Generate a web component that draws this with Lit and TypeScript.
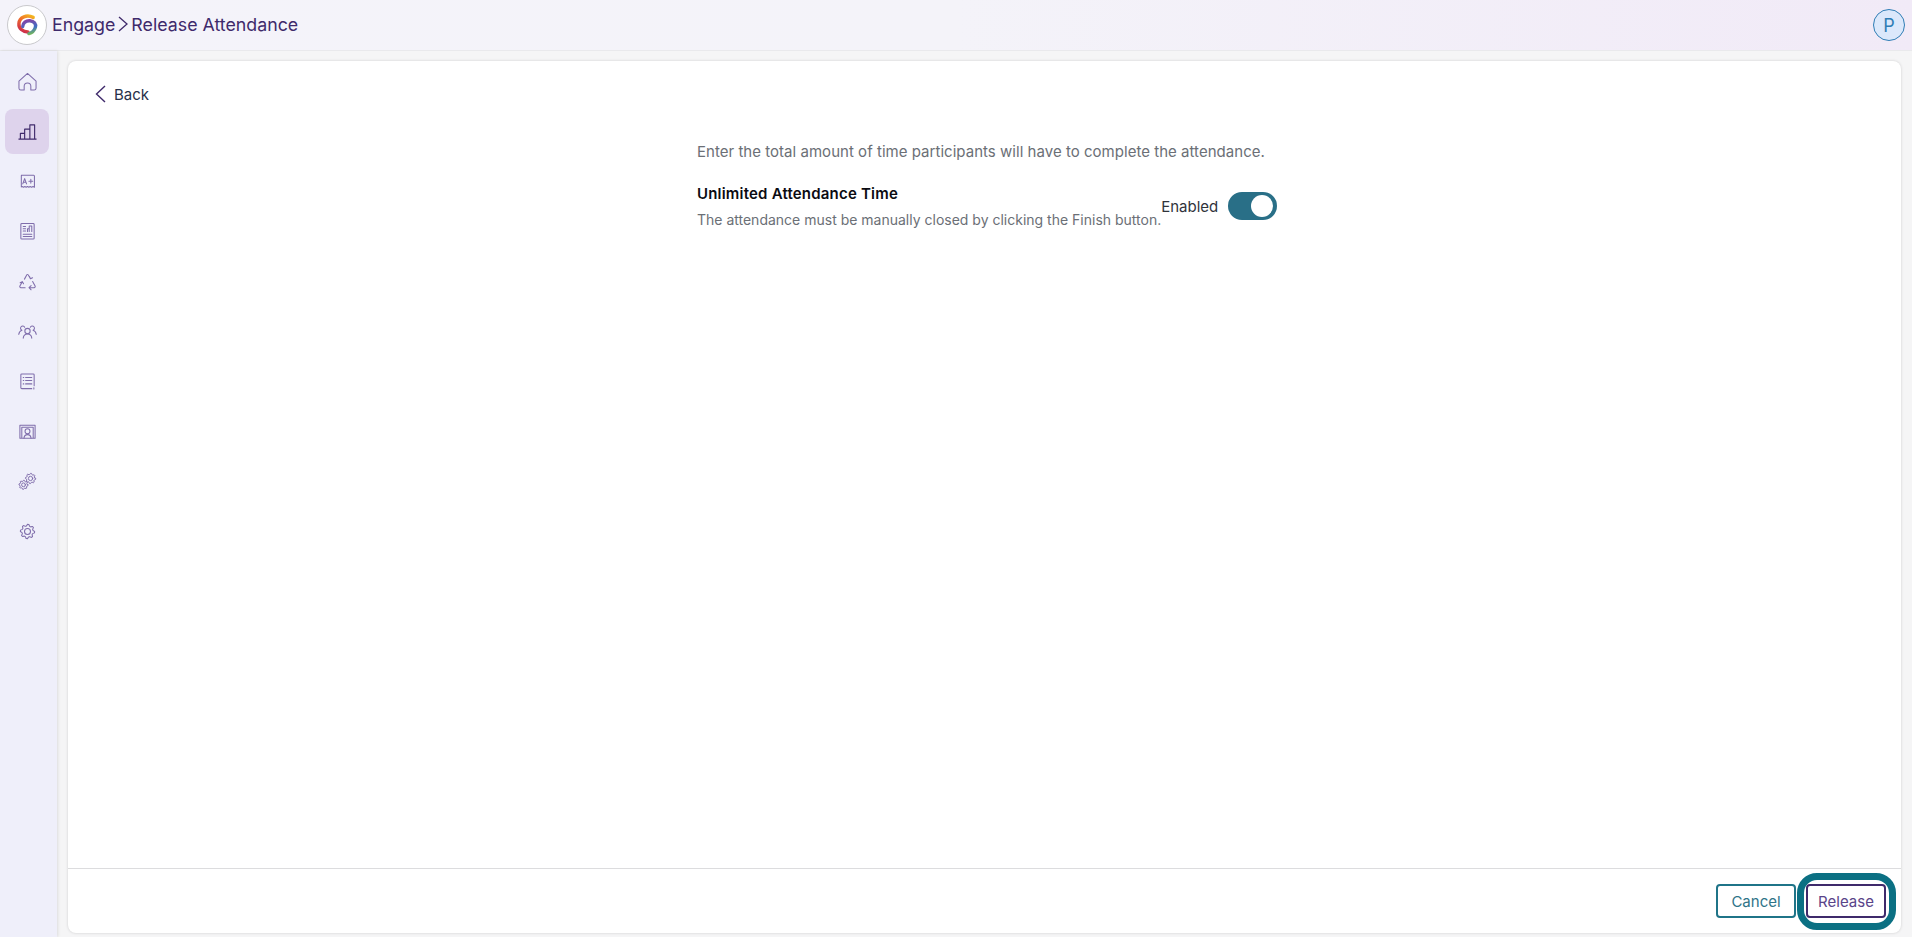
import { LitElement, html, css, svg } from "lit";
import { customElement } from "lit/decorators.js";

const ic = (body: unknown, w = 1.1) => html`<svg class="ic" viewBox="0 0 20 20" fill="none" stroke="#7f6dab" stroke-width=${w} stroke-linecap="round" stroke-linejoin="round">${body}</svg>`;

const gear = (cx: number, cy: number, r: number) => {
  const pts: string[] = [];
  const n = 8;
  for (let i = 0; i < n * 4; i++) {
    const a = (i / (n * 4)) * Math.PI * 2;
    const m = i % 4;
    const rr = m === 0 || m === 1 ? r : r * 0.78;
    pts.push(`${(cx + rr * Math.cos(a)).toFixed(2)},${(cy + rr * Math.sin(a)).toFixed(2)}`);
  }
  return svg`<polygon points=${pts.join(" ")}/><circle cx=${cx} cy=${cy} r=${r * 0.42}/>`;
};

const icons = [
  ic(svg`<path d="M1 9.500 10 1.500l9 8v7.500a2 2 0 0 1-2 2h-3.500v-4a3.500 3.500 0 0 0-7 0v4H3a2 2 0 0 1-2-2z"/>`),
  html`<svg class="ic" viewBox="0 0 20 20" fill="none" stroke="#3f2a6b" stroke-width="1.2" stroke-linejoin="round"><path d="M.5 18h19M2.500 18v-6h4.500v6M7 18V7.500h5.500V18M12.500 18V3h5v15"/></svg>`,
  ic(svg`<path d="M3.500 3.500h13a.8.8 0 0 1 .8.8V16l-1.500-.8-1.500.8-1.500-.8-1.400.8-1.400-.8-1.400.8-1.400-.8-1.400.8-1.500-.8-.8.5V4.300a.8.8 0 0 1 .8-.8z"/><path d="m5 12.500 2-5.500 2 5.500M5.700 10.800h2.600M11.500 9.700h4M13.500 7.700v4"/>`),
  ic(svg`<rect x="3" y="1.500" width="14" height="16.500" rx="1"/><path d="M5.500 4.800h2.500M5.500 7h2.500M5.500 9.500h2.500M5.500 12.800h9M5.500 15.300h9"/><path d="M10 10V7h1.800v3M11.800 10V4.300h2.700V10"/>`),
  ic(svg`<path d="M6.800 7.500 9.300 3a.8.8 0 0 1 1.400 0l2.400 4.100M15.300 6l-2.200 1.100-1-2.300"/><path d="m15.400 10 2.600 4.700a1.200 1.200 0 0 1-1 1.800h-5M13.800 14.300l-2.200 2.200 2.200 2.200"/><path d="M7.500 16.500H3a1.200 1.200 0 0 1-1-1.800l2.400-4.200M2.300 11.300l2.200-1.200 1.300 2.200"/>`),
  ic(svg`<circle cx="10" cy="9.500" r="2.800"/><path d="M5.500 17c.3-2.800 2.100-4.300 4.500-4.300s4.200 1.500 4.500 4.300"/><path d="M7 5.500a2.300 2.300 0 1 0-2.900 3.200C2.400 9.300 1.100 10.700.8 13M13 5.500a2.300 2.300 0 1 1 2.900 3.200c1.700.6 3 2 3.300 4.300"/>`),
  ic(svg`<path d="M17 14.500V3a1 1 0 0 0-1-1H4a1 1 0 0 0-1 1v13.500a1 1 0 0 0 1 1h10.500"/><path d="M5.500 5.700h.6M8 5.700h6.500M5.500 9h.6M8 9h6.500M5.500 12.500h.6M8 12.500h6.500"/><path d="M16.700 16.500v1.500"/>`),
  ic(svg`<path d="M2 3.500h16v13.500H2zM4 5.500h12M4 5.500V17M16 5.500V17"/><circle cx="10" cy="9.700" r="2.600"/><path d="M6.300 17c.2-2.300 1.600-3.700 3.700-3.700s3.500 1.400 3.700 3.700"/>`),
  ic(svg`${gear(13.200, 6.800, 5.400)}${gear(5.800, 13.500, 4.800)}`, 1),
  ic(svg`${gear(10, 10, 7.500)}`),
];

const logo = html`<svg class="logo" viewBox="0 0 40 40" fill="none" stroke-linecap="round">
  <defs>
    <linearGradient id="g1" gradientUnits="userSpaceOnUse" x1="28" y1="10" x2="18" y2="30"><stop offset="0" stop-color="#f4c21f"/><stop offset=".45" stop-color="#ef6a2c"/><stop offset="1" stop-color="#c9264f"/></linearGradient>
    <linearGradient id="g2" gradientUnits="userSpaceOnUse" x1="20" y1="14" x2="24" y2="31"><stop offset="0" stop-color="#8a3fa3"/><stop offset=".55" stop-color="#3f6fc4"/><stop offset="1" stop-color="#7cc44a"/></linearGradient>
  </defs>
  <path d="M26.500 12c-6.500-3.200-14.500-.5-15 6.500-.4 5 4 8.800 9.500 8.800" stroke="url(#g1)" stroke-width="3.600"/>
  <path d="M15.500 21.500c.2-3.700 3.500-6.300 7.500-6 4.500.4 6.800 3.400 5.800 7-1 3.400-3.800 5.800-6.800 6.500" stroke="url(#g2)" stroke-width="3.600"/>
</svg>`;

@customElement("app-root")
export class AppRoot extends LitElement {
  static styles = css`
    :host {
      display: flex;
      flex-direction: column;
      height: 937px;
      width: 1912px;
      overflow: hidden;
      font-family: Inter, "Noto Sans", sans-serif;
      background: #f5f5f6;
    }
    .top {
      height: 51px;
      flex: none;
      box-sizing: border-box;
      display: flex;
      align-items: center;
      padding: 0 7px;
      background: linear-gradient(90deg, #f4f3fa 0%, #f4f3f9 50%, #f1eaf7 100%);
      border-bottom: 1px solid #e9e9ec;
    }
    .logo-wrap {
      width: 40px;
      height: 40px;
      box-sizing: border-box;
      border: 1px solid #c9c9cc;
      border-radius: 50%;
      background: #fff;
      flex: none;
    }
    .logo { width: 38px; height: 38px; display: block; }
    .crumbs {
      margin-left: 5px;
      display: flex;
      align-items: center;
      font-size: 17.800px;
      color: #3f2a6b;
      transform: translateY(-1px);
    }
    .crumbs svg { width: 12px; height: 18px; margin: 0 2px 0 2px; }
    .avatar {
      margin-left: auto;
      width: 32px;
      height: 32px;
      box-sizing: border-box;
      border: 1.500px solid #2f7db5;
      border-radius: 50%;
      background: #dbe8fb;
      color: #2f7db5;
      font-size: 18px;
      display: flex;
      align-items: center;
      justify-content: center;
    }
    .body { flex: 1; display: flex; min-height: 0; }
    .side {
      width: 57px;
      flex: none;
      background: #efeffa;
      box-shadow: 1px 0 3px rgba(0, 0, 0, 0.1);
      display: flex;
      flex-direction: column;
      padding: 8px 0 0 5px;
      box-sizing: border-box;
    }
    .item {
      width: 44px;
      height: 45px;
      margin-bottom: 5px;
      border-radius: 8px;
      display: flex;
      align-items: center;
      justify-content: center;
    }
    .item.on { background: #ded3ec; }
    .ic { width: 19px; height: 19px; display: block; }
    .main { flex: 1; padding: 10px 11px 4px 11px; min-width: 0; display: flex; }
    .card {
      flex: 1;
      background: #fff;
      border-radius: 8px;
      box-shadow: 0 0 3px rgba(0, 0, 0, 0.16);
      display: flex;
      flex-direction: column;
      min-width: 0;
    }
    .content { flex: 1; padding: 0 27px; }
    .back {
      display: flex;
      align-items: center;
      height: 20px;
      margin-top: 23px;
      font-size: 15px;
      color: #27304a;
    }
    .back svg { width: 11px; height: 18px; margin-right: 8px; }
    .form { width: 580px; margin: 38px 0 0 602px; }
    .lead { font-size: 15px; line-height: 20px; color: #6b6f76; letter-spacing: 0.03px; white-space: nowrap; }
    .row { display: flex; margin-top: 22px; }
    .title { font-size: 15px; line-height: 20px; font-weight: 600; color: #0b0b12; letter-spacing: 0.2px; }
    .sub { font-size: 14px; line-height: 18px; margin-top: 7px; color: #6b6f76; white-space: nowrap; }
    .state { display: flex; align-items: center; height: 28px; margin-top: 8px; font-size: 15px; color: #30333b; }
    .sw {
      width: 49px;
      height: 28px;
      margin-left: 10px;
      box-sizing: border-box;
      border-radius: 14px;
      background: #296f87;
      display: flex;
      align-items: center;
      justify-content: flex-end;
      padding-right: 4px;
    }
    .sw i { width: 22px; height: 22px; border-radius: 50%; background: #fff; display: block; }
    .foot {
      flex: none;
      height: 65px;
      box-sizing: border-box;
      border-top: 1px solid #dcdcde;
      display: flex;
      align-items: flex-start;
      justify-content: flex-end;
      gap: 10px;
      padding: 15px 15px 0 0;
    }
    .btn {
      width: 80px;
      height: 34px;
      box-sizing: border-box;
      border-radius: 4px;
      background: #fff;
      font: 15px Inter, "Noto Sans", sans-serif;
      padding: 0;
    }
    .cancel { border: 2px solid #1f7488; color: #2f7488; }
    .release {
      position: relative;
      border: 2px solid #3f2a6b;
      color: #5a4489;
    }
    .release::after {
      content: "";
      position: absolute;
      left: -11px;
      right: -12px;
      top: -13px;
      bottom: -14px;
      border: 7px solid #0b7083;
      border-radius: 20px;
    }
  `;

  render() {
    return html`
      <div class="top">
        <div class="logo-wrap">${logo}</div>
        <div class="crumbs">
          <span>Engage</span>
          <svg viewBox="0 0 12 18" fill="none" stroke="#3f2a6b" stroke-width="1.300"><path d="M2 2l8 7-8 7"/></svg>
          <span>Release Attendance</span>
        </div>
        <div class="avatar">P</div>
      </div>
      <div class="body">
        <nav class="side">
          ${icons.map((i, n) => html`<div class="item ${n === 1 ? "on" : ""}">${i}</div>`)}
        </nav>
        <div class="main">
          <section class="card">
            <div class="content">
              <div class="back">
                <svg viewBox="0 0 11 18" fill="none" stroke="#3f2a6b" stroke-width="1.400"><path d="M10 1 1.500 9 10 17"/></svg>
                <span>Back</span>
              </div>
              <div class="form">
                <div class="lead">Enter the total amount of time participants will have to complete the attendance.</div>
                <div class="row">
                  <div>
                    <div class="title">Unlimited Attendance Time</div>
                    <div class="sub">The attendance must be manually closed by clicking the Finish button.</div>
                  </div>
                  <div class="state">Enabled<span class="sw"><i></i></span></div>
                </div>
              </div>
            </div>
            <div class="foot">
              <button class="btn cancel">Cancel</button>
              <button class="btn release">Release</button>
            </div>
          </section>
        </div>
      </div>
    `;
  }
}
